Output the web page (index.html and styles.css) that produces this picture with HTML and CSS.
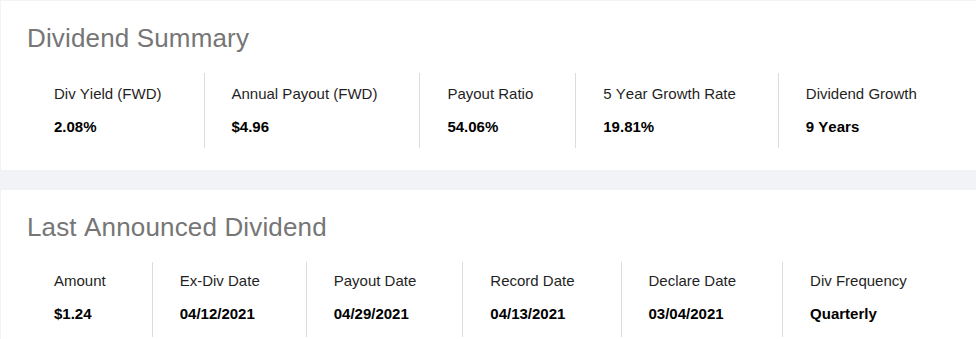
FILE: index.html
```html
<!DOCTYPE html>
<html lang="en">
<head>
<meta charset="utf-8">
<title>Dividends</title>
<link rel="stylesheet" href="styles.css">
</head>
<body>
  <section class="card">
    <h2 class="card-title">Dividend Summary</h2>
    <div class="stats stats-summary">
      <div class="stat"><div class="stat-label">Div Yield (FWD)</div><div class="stat-value">2.08%</div></div>
      <div class="stat"><div class="stat-label">Annual Payout (FWD)</div><div class="stat-value">$4.96</div></div>
      <div class="stat"><div class="stat-label">Payout Ratio</div><div class="stat-value">54.06%</div></div>
      <div class="stat"><div class="stat-label">5 Year Growth Rate</div><div class="stat-value">19.81%</div></div>
      <div class="stat"><div class="stat-label">Dividend Growth</div><div class="stat-value">9 Years</div></div>
    </div>
  </section>
  <section class="card card-second">
    <h2 class="card-title">Last Announced Dividend</h2>
    <div class="stats stats-last">
      <div class="stat"><div class="stat-label">Amount</div><div class="stat-value">$1.24</div></div>
      <div class="stat"><div class="stat-label">Ex-Div Date</div><div class="stat-value">04/12/2021</div></div>
      <div class="stat"><div class="stat-label">Payout Date</div><div class="stat-value">04/29/2021</div></div>
      <div class="stat"><div class="stat-label">Record Date</div><div class="stat-value">04/13/2021</div></div>
      <div class="stat"><div class="stat-label">Declare Date</div><div class="stat-value">03/04/2021</div></div>
      <div class="stat"><div class="stat-label">Div Frequency</div><div class="stat-value">Quarterly</div></div>
    </div>
  </section>
</body>
</html>
```
FILE: styles.css
```css
html, body {
  margin: 0;
  padding: 0;
}
body {
  background: #f2f3f6;
  padding: 1px 0 0 1px;
  font-family: "Liberation Sans", Arial, sans-serif;
  font-kerning: none;
}
.card {
  background: #ffffff;
  padding: 22px 0 22px 26px;
}
.card-second {
  margin-top: 20px;
}
.card-title {
  margin: 0 0 20px 0;
  font-size: 26px;
  line-height: 30px;
  font-weight: 400;
  color: #767676;
  letter-spacing: 0.15px;
}
.stats {
  display: flex;
}
.stat {
  padding: 12px 42px 13px 27px;
  border-left: 1px solid #dcdcdc;
}
.stat:first-child {
  border-left: none;
}
.stats-last .stat {
  padding: 10px 46px 15px 27px;
}
.stat-label {
  font-size: 15px;
  line-height: 17px;
  color: #1f1f1f;
}
.stat-value {
  margin-top: 16px;
  font-size: 15px;
  line-height: 17px;
  font-weight: 700;
  color: #000;
}
```
